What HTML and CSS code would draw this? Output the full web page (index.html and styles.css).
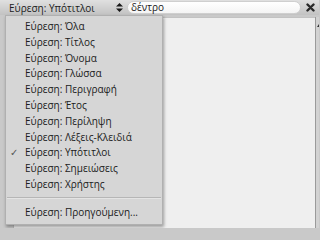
FILE: index.html
```html
<!DOCTYPE html>
<html>
<head>
<meta charset="utf-8">
<link rel="stylesheet" href="styles.css">
</head>
<body>
<div class="window">
  <div class="toolbar">
    <div class="select">
      <span class="select-label">Εύρεση: Υπότιτλοι</span>
      <svg class="updown" width="7" height="9" viewBox="0 0 7 9"><path d="M3.5 0 L7 3.5 H0 Z M3.5 9 L7 5.5 H0 Z" fill="#1a1a1a"/></svg>
    </div>
    <div class="search"><span class="search-text">δέντρο</span></div>
    <div class="close">
      <svg width="9" height="9" viewBox="0 0 9 9"><path d="M1.5 1.5 L7.5 7.5 M7.5 1.5 L1.5 7.5" stroke="#2a2a2a" stroke-width="2.4" stroke-linecap="round"/></svg>
    </div>
  </div>
  <div class="main">
    <div class="gutter"></div>
    <div class="panel"></div>
    <div class="scrollbar"><span class="arrow"></span></div>
  </div>
  <div class="menu">
    <div class="item">Εύρεση: Όλα</div>
    <div class="item">Εύρεση: Τίτλος</div>
    <div class="item">Εύρεση: Όνομα</div>
    <div class="item">Εύρεση: Γλώσσα</div>
    <div class="item">Εύρεση: Περιγραφή</div>
    <div class="item">Εύρεση: Έτος</div>
    <div class="item">Εύρεση: Περίληψη</div>
    <div class="item">Εύρεση: Λέξεις-Κλειδιά</div>
    <div class="item checked"><span class="check">✓</span>Εύρεση: Υπότιτλοι</div>
    <div class="item">Εύρεση: Σημειώσεις</div>
    <div class="item">Εύρεση: Χρήστης</div>
    <div class="sep"></div>
    <div class="item">Εύρεση: Προηγούμενη...</div>
  </div>
</div>
</body>
</html>
```

FILE: styles.css
```css
* { box-sizing: border-box; }
html, body { margin: 0; padding: 0; }
body {
  width: 319px;
  height: 228px;
  overflow: hidden;
  background: #c9c9c9;
  font-family: "Open Sans", "DejaVu Sans", sans-serif;
  font-size: 10px;
  color: #202020;
}
.window {
  position: relative;
  width: 319px;
  height: 228px;
  display: flex;
  flex-direction: column;
}
.toolbar {
  height: 15px;
  display: flex;
  align-items: center;
  background: linear-gradient(#e0e0e0, #c2c2c2);
  flex: none;
}
.select {
  width: 127px;
  display: flex;
  align-items: center;
  padding-left: 9px;
  padding-right: 4px;
  height: 15px;
}
.select-label {
  flex: 1;
  line-height: 14px;
  white-space: nowrap;
}
.updown { flex: none; }
.search {
  width: 174px;
  height: 13px;
  border-radius: 7px;
  background: linear-gradient(#ffffff, #f4f4f4);
  border: 1px solid #cfcfcf;
  display: flex;
  align-items: center;
  padding-left: 3px;
}
.search-text { line-height: 11px; color: #1a1a1a; }
.close {
  width: 18px;
  height: 15px;
  display: flex;
  align-items: center;
  justify-content: center;
}
.main {
  flex: 1;
  display: flex;
  padding-top: 2px;
}
.gutter { width: 13px; }
.panel {
  flex: 1;
  background: #efefef;
  border-top: 1px solid #c2c2c2;
  border-left: 1px solid #bdbdbd;
}
.scrollbar {
  width: 4px;
  background: #d2d2d2;
  border-left: 1px solid #9a9a9a;
  position: relative;
}
.arrow {
  position: absolute;
  left: 1px;
  top: 7px;
  width: 0;
  height: 0;
  border-left: 2px solid transparent;
  border-right: 2px solid transparent;
  border-bottom: 3px solid #333;
}
.menu {
  position: absolute;
  left: 5px;
  top: 15px;
  width: 158px;
  height: 210px;
  background: #d6d6d6;
  border: 1px solid #b0b0b0;
  box-shadow: 1px 2px 3px rgba(0,0,0,0.35);
  padding-top: 3px;
}
.item {
  position: relative;
  height: 15.8px;
  line-height: 15.8px;
  padding-left: 19px;
  white-space: nowrap;
}
.check {
  position: absolute;
  left: 4px;
  top: 0;
  color: #555;
  font-family: "DejaVu Sans", sans-serif;
  font-size: 10px;
}
.sep {
  margin: 4px 1px 6px 1px;
  height: 2px;
  border-top: 1px solid #b6b6b6;
  border-bottom: 1px solid #e4e4e4;
}
```
